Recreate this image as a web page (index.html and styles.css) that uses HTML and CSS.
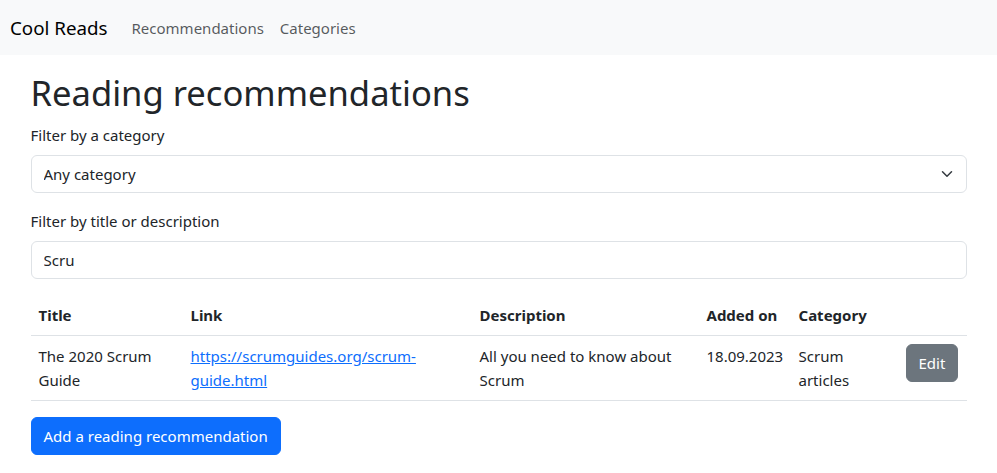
FILE: index.html
```html
<!DOCTYPE html>
<html lang="en">
<head>
<meta charset="utf-8">
<title>Cool Reads</title>
<link rel="stylesheet" href="styles.css">
</head>
<body>
<nav class="navbar">
  <a class="brand" href="#">Cool Reads</a>
  <ul class="nav-links">
    <li><a class="nav-link" href="#">Recommendations</a></li>
    <li><a class="nav-link" href="#">Categories</a></li>
  </ul>
</nav>
<main class="container">
  <h1 class="title">Reading recommendations</h1>
  <div class="field">
    <label class="form-label" for="cat">Filter by a category</label>
    <div class="select-wrap">
      <select id="cat" class="form-select">
        <option>Any category</option>
      </select>
      <svg class="chevron" width="16" height="12" viewBox="0 0 16 16" aria-hidden="true"><path fill="none" stroke="#343a40" stroke-linecap="round" stroke-linejoin="round" stroke-width="2" d="m2 5 6 6 6-6"/></svg>
    </div>
  </div>
  <div class="field">
    <label class="form-label" for="q">Filter by title or description</label>
    <input id="q" class="form-control" type="text" value="Scru">
  </div>
  <table class="table">
    <colgroup>
      <col class="c-title"><col class="c-link"><col class="c-desc"><col class="c-date"><col class="c-cat"><col class="c-act">
    </colgroup>
    <thead>
      <tr><th>Title</th><th>Link</th><th>Description</th><th>Added on</th><th>Category</th><th></th></tr>
    </thead>
    <tbody>
      <tr>
        <td>The 2020 Scrum Guide</td>
        <td><a class="link" href="#">https://scrumguides.org/scrum-guide.html</a></td>
        <td>All you need to know about Scrum</td>
        <td>18.09.2023</td>
        <td>Scrum articles</td>
        <td><button class="btn btn-secondary">Edit</button></td>
      </tr>
    </tbody>
  </table>
  <button class="btn btn-primary">Add a reading recommendation</button>
</main>
</body>
</html>
```
FILE: styles.css
```css
* { box-sizing: border-box; }
html, body { margin: 0; padding: 0; }
body {
  font-family: "Noto Sans", "Open Sans", sans-serif;
  font-size: 15px;
  line-height: 24px;
  color: #212529;
  background: #fff;
}
.navbar {
  display: flex;
  align-items: center;
  height: 55px;
  padding: 0 10px;
  background: #f8f9fa;
}
.brand {
  font-size: 18.75px;
  line-height: 30px;
  color: #000;
  text-decoration: none;
  margin-right: 16px;
  padding: 5px 0;
}
.nav-links {
  display: flex;
  list-style: none;
  margin: 0;
  padding: 0;
}
.nav-link {
  display: block;
  padding: 8px 8px;
  color: rgba(33, 37, 41, 0.75);
  text-decoration: none;
}
.container {
  width: 960px;
  margin: 0 auto;
  padding: 16px 12px 0;
}
.title {
  font-size: 34.6px;
  font-weight: 400;
  line-height: 44.4px;
  margin: 0 0 8px;
}
.field { margin-bottom: 16px; }
.form-label {
  display: block;
  margin-bottom: 8px;
}
.select-wrap { position: relative; }
.form-select, .form-control {
  display: block;
  width: 100%;
  height: 38px;
  padding: 6px 12px;
  font: inherit;
  color: #212529;
  background: #fff;
  border: 1px solid #dee2e6;
  border-radius: 6px;
  appearance: none;
  -webkit-appearance: none;
}
.form-select { padding-right: 36px; }
.chevron {
  position: absolute;
  right: 12px;
  top: 13px;
  pointer-events: none;
}
.table {
  width: 100%;
  border-collapse: collapse;
  table-layout: fixed;
  margin-bottom: 16px;
  vertical-align: top;
}
.c-title { width: 152px; }
.c-link { width: 289px; }
.c-desc { width: 227px; }
.c-date { width: 92px; }
.c-cat { width: 107px; }
.c-act { width: 69px; }
.table th, .table td {
  padding: 8px;
  text-align: left;
  border-bottom: 1px solid #dee2e6;
  vertical-align: top;
}
.table th { font-weight: 700; }
.link { color: #0d6efd; text-decoration: underline; }
.btn {
  display: inline-block;
  font: inherit;
  line-height: 24px;
  padding: 6px 12px;
  border: 1px solid transparent;
  border-radius: 6px;
  color: #fff;
  cursor: pointer;
}
.btn-secondary { background: #6c757d; border-color: #6c757d; }
.btn-primary { background: #0d6efd; border-color: #0d6efd; }
```
